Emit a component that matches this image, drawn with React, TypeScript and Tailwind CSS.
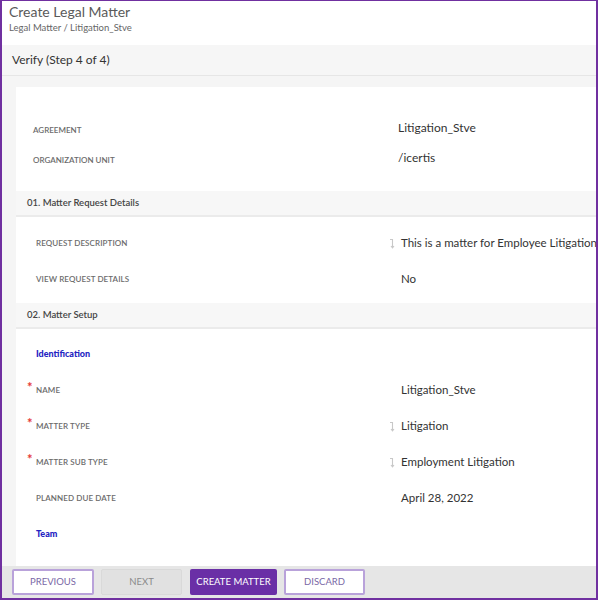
import React from 'react';

const font = { fontFamily: 'Lato, "Open Sans", sans-serif' };

function Lookup() {
  return (
    <svg width="6" height="11" viewBox="0 0 6 11" className="shrink-0">
      <path d="M1 1.5 H3.5 V9.5 M2 8 L3.5 9.8 L5 8" stroke="#c8c8c8" strokeWidth="1.1" fill="none" />
    </svg>
  );
}

type Row = { label: string; value: string; required?: boolean; lookup?: boolean };

function Field({ label, value, required, lookup }: Row) {
  return (
    <div className="flex h-[36px] items-center">
      <div className="flex w-[373px] shrink-0 items-center pl-[11px]">
        <span className="-mt-[5px] w-[9px] text-[13px] font-bold leading-none text-[#e53935]">{required ? '*' : ''}</span>
        <span className="text-[8px] font-semibold uppercase tracking-[0.1px] text-[#6b6b6b]">{label}</span>
      </div>
      <div className="flex w-[12px] shrink-0 items-center">{lookup && <Lookup />}</div>
      <span className="whitespace-nowrap text-[11.5px] text-[#333]">{value}</span>
    </div>
  );
}

function SectionBar({ title }: { title: string }) {
  return (
    <div className="flex h-[26px] items-center border-b-2 border-[#ebebeb] bg-[#f7f7f7] pl-[11px]">
      <span className="text-[9.5px] font-semibold text-[#454545]">{title}</span>
    </div>
  );
}

function Group({ title }: { title: string }) {
  return (
    <div className="flex h-[36px] items-center pl-[20px]">
      <span className="text-[9px] font-black text-[#2323c2]">{title}</span>
    </div>
  );
}

export default function App() {
  return (
    <div
      style={font}
      className="flex h-[600px] w-[598px] flex-col overflow-hidden border-t border-r-2 border-b-2 border-l-2 border-[#7030a0] bg-[#f5f5f5]"
    >
      {/* Page header */}
      <div className="flex h-[44px] shrink-0 flex-col bg-white pt-[2px] pl-[7px] shadow-[0_1px_2px_rgba(0,0,0,0.12)]">
        <div className="text-[14px] leading-[18px] text-[#5a5a5a]">Create Legal Matter</div>
        <div className="mt-[1px] text-[9.5px] leading-[12px] text-[#666]">Legal Matter / Litigation_Stve</div>
      </div>

      {/* Step bar */}
      <div className="flex h-[31px] shrink-0 items-center border-b border-[#e6e6e6] bg-[#f6f6f6] pl-[10px]">
        <span className="text-[12px] text-[#333]">Verify (Step 4 of 4)</span>
      </div>

      {/* Body */}
      <div className="flex min-h-0 flex-1 flex-col pt-[11px] pl-[14px]">
        <div className="min-h-0 flex-1 overflow-hidden bg-white">
          <div className="pt-[28px]">
            <div className="flex h-[30px] items-center">
              <span className="w-[382px] shrink-0 pl-[17px] text-[8px] font-semibold uppercase text-[#6b6b6b]">Agreement</span>
              <span className="-mt-[4px] text-[12px] text-[#333]">Litigation_Stve</span>
            </div>
            <div className="flex h-[30px] items-center">
              <span className="w-[382px] shrink-0 pl-[17px] text-[8px] font-semibold uppercase text-[#6b6b6b]">Organization Unit</span>
              <span className="-mt-[4px] text-[12px] text-[#333]">/icertis</span>
            </div>
          </div>

          <div className="mt-[16px]">
            <SectionBar title="01. Matter Request Details" />
          </div>
          <div className="mt-[8px]">
            <Field label="Request Description" value="This is a matter for Employee Litigation" lookup />
            <Field label="View Request Details" value="No" />
          </div>

          <div className="mt-[6px]">
            <SectionBar title="02. Matter Setup" />
          </div>
          <div className="mt-[7px]">
            <Group title="Identification" />
            <Field label="Name" value="Litigation_Stve" required />
            <Field label="Matter Type" value="Litigation" required lookup />
            <Field label="Matter Sub Type" value="Employment Litigation" required lookup />
            <Field label="Planned Due Date" value="April 28, 2022" />
            <Group title="Team" />
          </div>
        </div>
      </div>

      {/* Footer actions */}
      <div className="flex h-[32px] shrink-0 items-center gap-[7px] bg-[#e6e6e6] pl-[10px]">
        <button className="h-[26px] w-[82px] rounded-[2px] border-2 border-[#b9a2da] bg-white text-[9.5px] uppercase text-[#7a68a6]">
          Previous
        </button>
        <button className="h-[26px] w-[81px] rounded-[2px] border border-[#d9d9d9] bg-[#e1e1e1] text-[9.5px] uppercase text-[#8a8a8a]">
          Next
        </button>
        <button className="ml-[1px] h-[26px] w-[87px] rounded-[2px] bg-[#6a2fa6] text-[9.5px] uppercase text-white">
          Create Matter
        </button>
        <button className="h-[26px] w-[81px] rounded-[2px] border-2 border-[#b9a2da] bg-white text-[9.5px] uppercase text-[#7a68a6]">
          Discard
        </button>
      </div>
    </div>
  );
}
